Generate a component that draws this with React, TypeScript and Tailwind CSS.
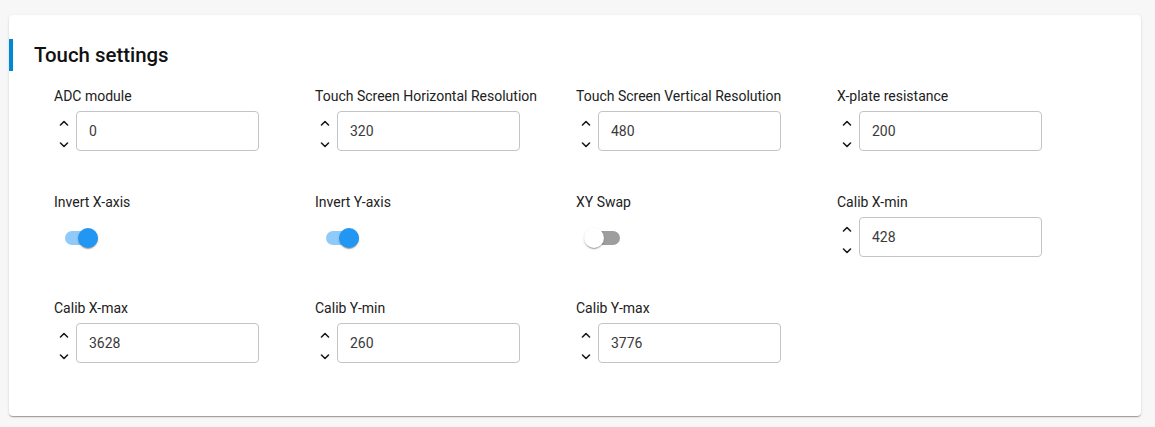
import { useState } from 'react'

type Field =
  | { kind: 'number'; label: string; value: string }
  | { kind: 'switch'; label: string; on: boolean }

const fields: Field[] = [
  { kind: 'number', label: 'ADC module', value: '0' },
  { kind: 'number', label: 'Touch Screen Horizontal Resolution', value: '320' },
  { kind: 'number', label: 'Touch Screen Vertical Resolution', value: '480' },
  { kind: 'number', label: 'X-plate resistance', value: '200' },
  { kind: 'switch', label: 'Invert X-axis', on: true },
  { kind: 'switch', label: 'Invert Y-axis', on: true },
  { kind: 'switch', label: 'XY Swap', on: false },
  { kind: 'number', label: 'Calib X-min', value: '428' },
  { kind: 'number', label: 'Calib X-max', value: '3628' },
  { kind: 'number', label: 'Calib Y-min', value: '260' },
  { kind: 'number', label: 'Calib Y-max', value: '3776' },
]

function Chevron({ up }: { up?: boolean }) {
  return (
    <svg width="10" height="6" viewBox="0 0 10 6" fill="none">
      <path
        d={up ? 'M1.5 5 L5 1.5 L8.5 5' : 'M1.5 1 L5 4.5 L8.5 1'}
        stroke="#1a1a1a"
        strokeWidth="1.6"
        strokeLinecap="round"
        strokeLinejoin="round"
      />
    </svg>
  )
}

function NumberField({ value }: { value: string }) {
  const [v, setV] = useState(value)
  return (
    <div className="flex items-stretch">
      <div className="flex h-[40px] w-[22px] flex-col items-center justify-between pt-[9px] pb-[3px] pr-[2px]">
        <Chevron up />
        <Chevron />
      </div>
      <input
        value={v}
        onChange={(e) => setV(e.target.value)}
        className="h-[40px] w-[183px] rounded-[4px] border border-[#c4c4c4] bg-white pl-[12px] text-[14px] text-[#3a3a3a] outline-none"
      />
    </div>
  )
}

function Toggle({ on }: { on: boolean }) {
  const [checked, setChecked] = useState(on)
  return (
    <button
      onClick={() => setChecked(!checked)}
      className="relative ml-[11px] mt-[14px] h-[14px] w-[33px] rounded-full"
    >
      <span
        className={
          'absolute inset-0 rounded-full ' +
          (checked ? 'bg-[#90caf9]' : 'bg-[#9e9e9e]')
        }
      />
      <span
        className={
          'absolute top-[-3px] h-[20px] w-[20px] rounded-full shadow-[0_2px_1px_-1px_rgba(0,0,0,0.2),0_1px_1px_0_rgba(0,0,0,0.14),0_1px_3px_0_rgba(0,0,0,0.12)] ' +
          (checked ? 'left-[13px] bg-[#2196f3]' : 'left-[-3px] bg-white')
        }
      />
    </button>
  )
}

export default function App() {
  return (
    <div
      className="min-h-[427px] bg-[#f7f7f7] pt-[15px] pl-[9px] pr-[14px]"
      style={{ fontFamily: 'Roboto, "Liberation Sans", sans-serif' }}
    >
      <div className="h-[401px] w-[1132px] rounded-[4px] bg-white pt-[24px] shadow-[0_2px_1px_-1px_rgba(0,0,0,0.2),0_1px_1px_0_rgba(0,0,0,0.14),0_1px_3px_0_rgba(0,0,0,0.12)]">
        <div className="flex items-center">
          <div className="h-[32px] w-[4px] bg-[#0288d1]" />
          <h2 className="ml-[21px] text-[20.4px] font-medium leading-[32px] text-[#111]">
            Touch settings
          </h2>
        </div>

        <div className="mt-[15px] grid grid-cols-[261px_261px_261px_261px] gap-y-[41px] pl-[45px]">
          {fields.map((f) => (
            <div key={f.label} className="flex h-[65px] flex-col">
              <label className="mb-[5px] text-[14px] leading-[20px] text-[#212121]">
                {f.label}
              </label>
              {f.kind === 'number' ? (
                <NumberField value={f.value} />
              ) : (
                <Toggle on={f.on} />
              )}
            </div>
          ))}
        </div>
      </div>
    </div>
  )
}
